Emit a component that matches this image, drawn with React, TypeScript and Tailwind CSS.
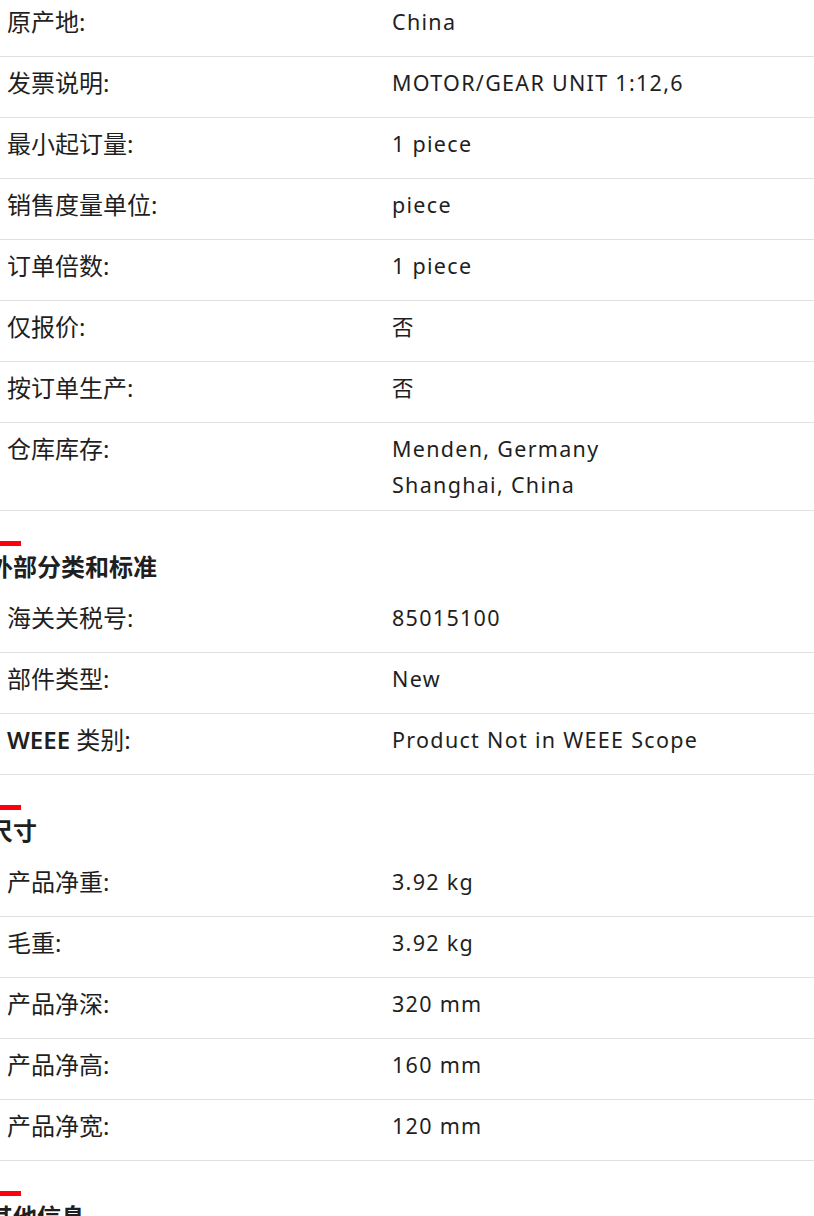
const SECTIONS: { title: string | null; rows: [string, string[]][] }[] = [
  {
    title: null,
    rows: [
      ['原产地:', ['China']],
      ['发票说明:', ['MOTOR/GEAR UNIT 1:12,6']],
      ['最小起订量:', ['1 piece']],
      ['销售度量单位:', ['piece']],
      ['订单倍数:', ['1 piece']],
      ['仅报价:', ['否']],
      ['按订单生产:', ['否']],
      ['仓库库存:', ['Menden, Germany', 'Shanghai, China']],
    ],
  },
  {
    title: '外部分类和标准',
    rows: [
      ['海关关税号:', ['85015100']],
      ['部件类型:', ['New']],
      ['WEEE 类别:', ['Product Not in WEEE Scope']],
    ],
  },
  {
    title: '尺寸',
    rows: [
      ['产品净重:', ['3.92 kg']],
      ['毛重:', ['3.92 kg']],
      ['产品净深:', ['320 mm']],
      ['产品净高:', ['160 mm']],
      ['产品净宽:', ['120 mm']],
    ],
  },
  {
    title: '其他信息',
    rows: [],
  },
]

const FONT = "font-['Noto_Sans','Noto_Sans_CJK_SC',sans-serif]"

function Label({ text }: { text: string }) {
  // latin part of the label renders heavier in the original
  if (text.startsWith('WEEE')) {
    return (
      <>
        <span className="font-semibold">WEEE</span>
        {text.slice(4)}
      </>
    )
  }
  return <>{text}</>
}

export default function App() {
  return (
    <div className={`w-[814px] h-[1216px] overflow-hidden bg-white text-[#1f1f1f] ${FONT}`}>
      <div className="w-[825px] ml-[-11px] mt-[-4px]">
        {SECTIONS.map((s, i) => (
          <div key={i}>
            {s.title && (
              <div className="pt-[30px]">
                <div className="w-[32px] h-[5px] bg-[#ff000f]" />
                <h2 className="pt-[1px] pb-[5px] text-[24px] leading-[40px] font-bold">{s.title}</h2>
              </div>
            )}
            {s.rows.map(([label, values]) => (
              <div key={label} className="flex min-h-[61px] border-b border-[#e0e0e0] pt-2 pb-[7px] leading-[36px]">
                <div className="w-[403px] pl-[18px] text-[24px]">
                  <Label text={label} />
                </div>
                <div className="flex-1 text-[21.5px] tracking-[1.3px]">
                  {values.map(v => <div key={v}>{v}</div>)}
                </div>
              </div>
            ))}
          </div>
        ))}
      </div>
    </div>
  )
}
